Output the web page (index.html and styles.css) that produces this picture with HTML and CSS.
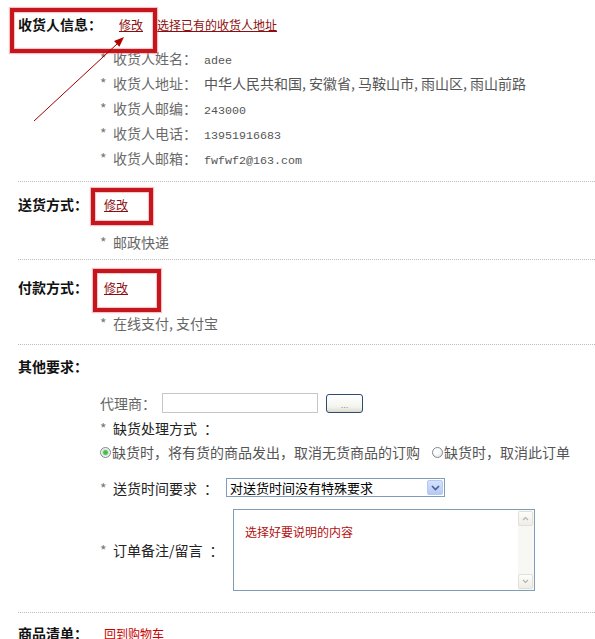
FILE: index.html
```html
<!DOCTYPE html>
<html lang="zh-CN">
<head>
<meta charset="utf-8">
<title>订单信息</title>
<link rel="stylesheet" href="styles.css">
</head>
<body>
<div class="page">
  <section class="sec s1">
    <div class="head"><h2 class="title">收货人信息：</h2><a class="edit e1" href="#">修改</a><a class="edit e2" href="#">选择已有的收货人地址</a></div>
    <ul class="info">
      <li><span class="star">*</span><span class="k">收货人姓名：</span><span class="v mono">adee</span></li>
      <li><span class="star">*</span><span class="k">收货人地址：</span><span class="v">中华人民共和国<span class="c">,</span>安徽省<span class="c">,</span>马鞍山市<span class="c">,</span>雨山区<span class="c">,</span>雨山前路</span></li>
      <li><span class="star">*</span><span class="k">收货人邮编：</span><span class="v mono">243000</span></li>
      <li><span class="star">*</span><span class="k">收货人电话：</span><span class="v mono">13951916683</span></li>
      <li><span class="star">*</span><span class="k">收货人邮箱：</span><span class="v mono">fwfwf2@163.com</span></li>
    </ul>
  </section>

  <section class="sec s2">
    <div class="head"><h2 class="title">送货方式：</h2><a class="edit e3" href="#">修改</a></div>
    <p class="item"><span class="star">*</span>邮政快递</p>
  </section>

  <section class="sec s3">
    <div class="head"><h2 class="title">付款方式：</h2><a class="edit e3" href="#">修改</a></div>
    <p class="item"><span class="star">*</span>在线支付<span class="c">,</span>支付宝</p>
  </section>

  <section class="sec s4">
    <div class="head"><h2 class="title">其他要求：</h2></div>
    <div class="row r-agent">
      <span class="lbl-grey">代理商：</span>
      <input class="txt" type="text">
      <button class="btn" type="button">...</button>
    </div>
    <div class="row r-stock"><span class="star">*</span><span class="lbl-dark">缺货处理方式&ensp;：</span></div>
    <div class="row r-radio">
      <label class="opt"><input type="radio" name="stock" class="rd" checked><span>缺货时，将有货的商品发出，取消无货商品的订购</span></label>
      <label class="opt opt2"><input type="radio" name="stock" class="rd"><span>缺货时，取消此订单</span></label>
    </div>
    <div class="row r-time">
      <span class="lbl-fixed lf-time"><span class="star">*</span><span class="lbl-dark">送货时间要求&ensp;：</span></span>
      <div class="sel">
        <select class="sel-in"><option>对送货时间没有特殊要求</option></select>
        <span class="dd"><svg width="9" height="6" viewBox="0 0 9 6"><path d="M1 1 L4.5 4.5 L8 1" fill="none" stroke="#4d6185" stroke-width="1.6"/></svg></span>
      </div>
    </div>
    <div class="row r-memo">
      <span class="lbl-fixed lf-memo"><span class="star">*</span><span class="lbl-dark">订单备注/留言&ensp;：</span></span>
      <div class="memo">
        <textarea class="memo-in">选择好要说明的内容</textarea>
        <div class="sbar">
          <span class="sbtn"><svg width="7" height="5" viewBox="0 0 7 5"><path d="M1 4 L3.5 1.5 L6 4" fill="none" stroke="#b4b4ac" stroke-width="1.2"/></svg></span>
          <span class="sbtn"><svg width="7" height="5" viewBox="0 0 7 5"><path d="M1 1 L3.5 3.5 L6 1" fill="none" stroke="#b4b4ac" stroke-width="1.2"/></svg></span>
        </div>
      </div>
    </div>
  </section>

  <section class="sec s5">
    <div class="head"><h2 class="title">商品清单：</h2><a class="edit e4" href="#">回到购物车</a></div>
  </section>

  <div class="mark m1"></div>
  <div class="mark m2"></div>
  <div class="mark m3"></div>
  <svg class="arrow" width="140" height="130" viewBox="0 0 140 130">
    <line x1="34" y1="121" x2="117" y2="44" stroke="#a00000" stroke-width="1"/>
    <polygon points="124,37 119.4,46.7 114,40.9" fill="#b00000"/>
  </svg>
</div>
</body>
</html>
```

FILE: styles.css
```css
html, body {
  margin: 0;
  padding: 0;
  background: #fff;
  overflow: hidden;
}

.page {
  position: relative;
  width: 595px;
  height: 639px;
  overflow: hidden;
  font-family: "Noto Sans CJK SC", "Noto Sans", sans-serif;
  font-size: 14px;
  color: #666;
}

.sec {
  margin-left: 18px;
  border-bottom: 1px dotted #bdbdbd;
}

.s1 { padding: 14px 0 10px; }
.s2 { padding: 12px 0 7px; }
.s3 { padding: 17px 0 11px; }
.s4 { padding: 11px 0 21px; }
.s5 { padding: 10px 0 0; border-bottom: 0; }

.head {
  height: 20px;
  line-height: 20px;
  white-space: nowrap;
}

.title {
  display: inline;
  margin: 0;
  font-size: 14px;
  font-weight: bold;
  color: #111;
}

.edit {
  font-size: 12px;
  color: #8c0f0f;
  text-decoration: underline;
}

.e1 { margin-left: 17px; }
.e2 { margin-left: 14px; }
.e3 { margin-left: 16px; }
.e4 { margin-left: 16px; color: #c80000; }

.star {
  display: inline-block;
  width: 13px;
  color: #777;
}

.info {
  list-style: none;
  margin: 12px 0 0;
  padding: 0 0 0 82px;
}

.info li {
  height: 25px;
  line-height: 25px;
  white-space: nowrap;
}

.k {
  display: inline-block;
  width: 91px;
  color: #6a6a6a;
}

.v { color: #555; }

.mono {
  font-family: "Liberation Mono", monospace;
  font-size: 11.67px;
}

.c {
  display: inline-block;
  width: 7px;
}

.item {
  margin: 0;
  padding-left: 82px;
  height: 20px;
  line-height: 20px;
  color: #666;
}

.s2 .item { margin-top: 18px; }
.s3 .item { margin-top: 16px; }

.row {
  display: flex;
  align-items: center;
  padding-left: 82px;
  white-space: nowrap;
  line-height: 20px;
}

.r-agent { margin-top: 17px; height: 20px; }
.r-stock { margin-top: 5px; height: 20px; }
.r-radio { margin-top: 4px; height: 20px; }
.r-time { margin-top: 16px; height: 19px; }
.r-memo { margin-top: 12px; }

.lbl-grey { color: #666; }
.lbl-dark { color: #222; }

.txt {
  box-sizing: border-box;
  width: 156px;
  height: 20px;
  margin: 0 0 0 6px;
  border: 1px solid #c6c6c6;
  padding: 0 3px;
  background: #fff;
  outline: none;
}

.btn {
  box-sizing: border-box;
  width: 37px;
  height: 19px;
  margin: 0 0 0 8px;
  padding: 4px 0 0;
  border: 1px solid #2f4b6e;
  border-radius: 3px;
  background: linear-gradient(#ffffff, #f4f4ef 70%, #dcd8cc);
  color: #8a8a8a;
  font-family: "Liberation Sans", sans-serif;
  font-size: 9px;
  line-height: 10px;
}

.opt {
  display: flex;
  align-items: center;
  color: #555;
}

.opt2 { margin-left: 12px; }

.rd {
  appearance: none;
  -webkit-appearance: none;
  box-sizing: border-box;
  width: 11px;
  height: 11px;
  margin: 0 1px 0 0;
  border: 1px solid #7b8a97;
  border-radius: 50%;
  background: radial-gradient(circle at 40% 35%, #ffffff 30%, #dcdcd6 100%);
  position: relative;
}

.rd:checked {
  background: radial-gradient(circle, #3fae3f 0, #5cc45c 2px, #cde8cd 3px, #f4f4f0 4px, #dcdcd6 100%);
}

.lbl-fixed {
  display: inline-block;
}

.lf-time { width: 126px; }
.lf-memo { width: 133px; }

.sel {
  box-sizing: border-box;
  display: flex;
  width: 219px;
  height: 19px;
  border: 1px solid #7f9db9;
  background: #fff;
}

.sel-in {
  appearance: none;
  -webkit-appearance: none;
  flex: 1;
  min-width: 0;
  height: 17px;
  margin: 0;
  border: 0;
  padding: 0 0 0 3px;
  background: #fff;
  font-family: "Noto Sans CJK SC", sans-serif;
  font-size: 13px;
  line-height: 17px;
  color: #000;
  outline: none;
}

.dd {
  box-sizing: border-box;
  display: flex;
  align-items: center;
  justify-content: center;
  width: 16px;
  height: 15px;
  margin: 1px 1px 0 0;
  border: 1px solid #b7c9f0;
  border-radius: 2px;
  background: linear-gradient(#d5e2fd, #b4c9f7);
}

.memo {
  box-sizing: border-box;
  display: flex;
  width: 302px;
  height: 82px;
  border: 1px solid #7f9db9;
  background: #fff;
}

.memo-in {
  flex: 1;
  min-width: 0;
  margin: 0;
  border: 0;
  padding: 14px 0 0 11px;
  resize: none;
  overflow: hidden;
  font-family: "Noto Sans CJK SC", sans-serif;
  font-size: 12px;
  line-height: 16px;
  color: #b30f0f;
  background: #fff;
  outline: none;
}

.sbar {
  display: flex;
  flex-direction: column;
  justify-content: space-between;
  width: 16px;
  padding: 1px 0;
  box-sizing: border-box;
  background: #f7f7f3;
}

.sbtn {
  box-sizing: border-box;
  display: flex;
  align-items: center;
  justify-content: center;
  width: 15px;
  height: 15px;
  border: 1px solid #e2e0d6;
  border-radius: 2px;
  background: linear-gradient(#fdfdfb, #eeede6);
}

.mark {
  position: absolute;
  box-sizing: border-box;
  border: 4px solid #c5161d;
  box-shadow: 0 0 1px 1px rgba(230, 120, 120, 0.45), inset 0 0 1px 1px rgba(230, 120, 120, 0.45);
  pointer-events: none;
}

.m1 { left: 10px; top: 8px; width: 147px; height: 45px; }
.m2 { left: 91px; top: 188px; width: 62px; height: 37px; }
.m3 { left: 93px; top: 269px; width: 68px; height: 43px; }

.arrow {
  position: absolute;
  left: 0;
  top: 0;
  pointer-events: none;
}
```
